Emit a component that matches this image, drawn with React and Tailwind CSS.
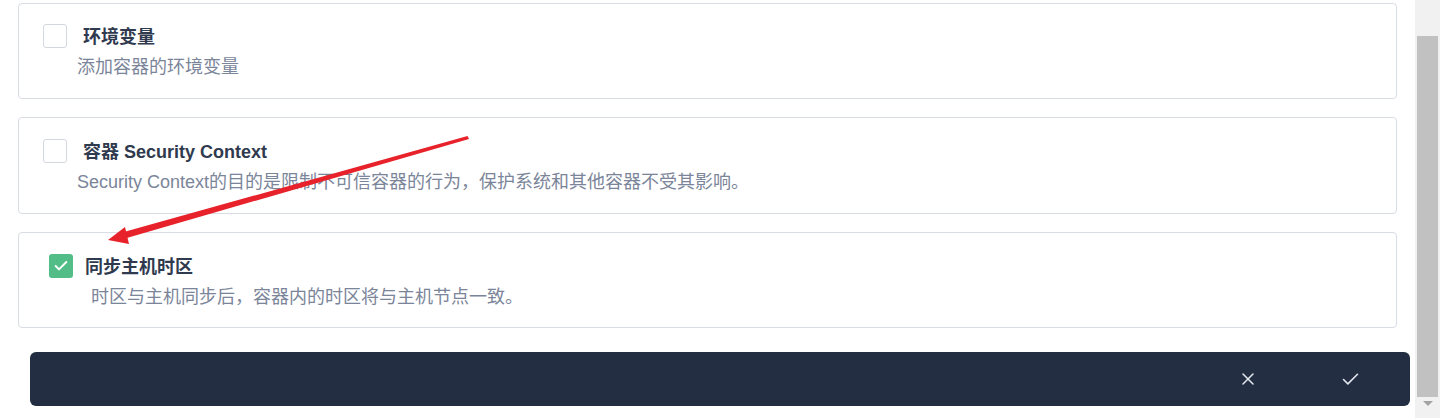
import { Check, X } from 'lucide-react';

const FONT = { fontFamily: '"Liberation Sans", "Noto Sans CJK SC", sans-serif' };

// 可选配置项卡片
function OptionCard({ title, desc, checked, shift, tall }) {
  return (
    <div className="rounded-[4px] border border-[#d8dce4] bg-white">
      <div
        className={
          shift
            ? 'pl-[30px] pt-[21px] pb-[17px]'
            : tall
              ? 'pl-[24px] pt-[21px] pb-[18px]'
              : 'pl-[24px] pt-[20px] pb-[18px]'
        }
      >
        <div className="flex items-center h-6">
          {checked ? (
            <span className="w-6 h-6 rounded-[3px] bg-[#52bd87] flex items-center justify-center">
              <Check className="w-4 h-4 text-white" strokeWidth={3} />
            </span>
          ) : (
            <span className="w-6 h-6 rounded-[3px] border border-[#d3d7de] bg-white" />
          )}
          <span className={`${shift ? 'ml-[12px]' : 'ml-[16px]'} text-[18px] font-bold text-[#303a4e] leading-6 pt-[2px]`}>
            {title}
          </span>
        </div>
        <p
          className={`${shift ? 'ml-[42px]' : 'ml-[34px]'} mt-[6px] text-[18px] leading-[26px] text-[#7b8599]`}
        >
          {desc}
        </p>
      </div>
    </div>
  );
}

export default function App() {
  return (
    <div className="relative flex h-[418px] w-full bg-white overflow-hidden" style={FONT}>
      <div className="flex-1 flex flex-col">
        <div className="flex flex-col gap-[18px] pl-[18px] pr-[18px] pt-[3px]">
          <OptionCard title="环境变量" desc="添加容器的环境变量" />
          <OptionCard
            title="容器 Security Context"
            desc="Security Context的目的是限制不可信容器的行为，保护系统和其他容器不受其影响。"
            tall
          />
          <OptionCard
            title="同步主机时区"
            desc="时区与主机同步后，容器内的时区将与主机节点一致。"
            checked
            shift
          />
        </div>

        {/* 底部操作栏 */}
        <div className="ml-[30px] mr-[5px] mt-[24px] h-[54px] rounded-[6px] bg-[#232e43] flex items-center justify-end">
          <button className="w-[36px] h-[36px] flex items-center justify-center text-[#e4e7ee]">
            <X className="w-[20px] h-[20px]" strokeWidth={1.8} />
          </button>
          <button className="ml-[66px] mr-[42px] w-[36px] h-[36px] flex items-center justify-center text-[#e4e7ee]">
            <Check className="w-[21px] h-[21px]" strokeWidth={1.8} />
          </button>
        </div>
      </div>

      {/* 模拟滚动条 */}
      <div className="w-[25px] bg-[#f1f1f1] flex flex-col items-end pr-[2px]">
        <div className="mt-[36px] w-[21px] h-[361px] bg-[#c1c1c1]" />
        <div className="mt-[4px] w-[21px] flex justify-center">
          <span className="block w-0 h-0 border-l-[5px] border-r-[5px] border-t-[5px] border-l-transparent border-r-transparent border-t-[#a3a3a3]" />
        </div>
      </div>

      {/* 标注箭头 */}
      <svg className="absolute left-0 top-0 pointer-events-none" width="1440" height="418">
        <polygon points="467.5,136 469,139 125,238.5 122,232.5" fill="#e8222a" />
        <polygon points="108,240 125,227 129,244" fill="#e8222a" />
      </svg>
    </div>
  );
}
